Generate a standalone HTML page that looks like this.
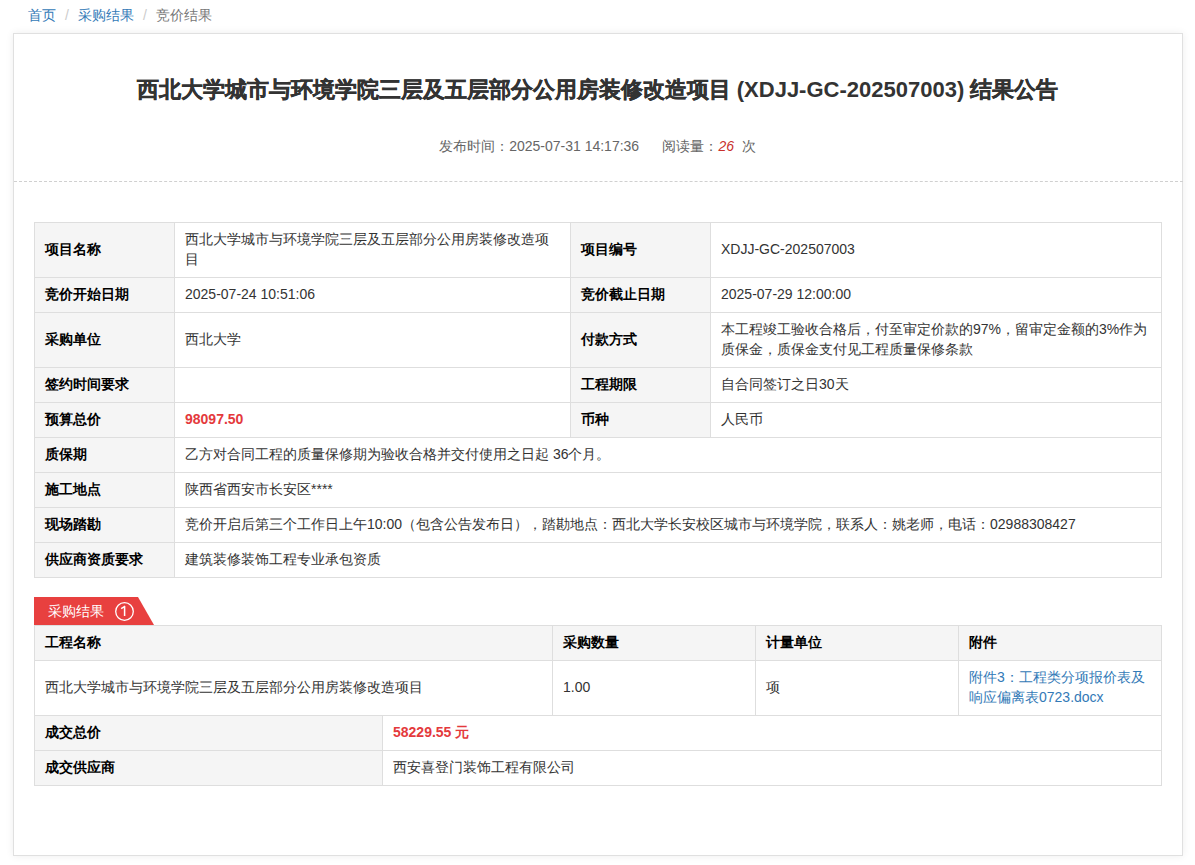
<!DOCTYPE html>
<html><head><meta charset="utf-8">
<style>
*{box-sizing:border-box;margin:0;padding:0}
html,body{width:1195px;height:865px;overflow:hidden;background:#fff}
body{font-family:"Liberation Sans",sans-serif;font-size:14px;color:#333;position:relative}
.bc{position:absolute;left:28px;top:6px;font-size:14px;line-height:18px;white-space:nowrap}
.bc a{color:#337ab7;text-decoration:none}
.bc .sep{color:#ccc;padding:0 9px}
.bc .cur{color:#777}
.card{position:absolute;left:13px;top:33px;width:1170px;height:823px;border:1px solid #e0e0e0;box-shadow:0 0 8px rgba(0,0,0,.07);background:#fff}
.title{position:absolute;left:0;top:75px;-webkit-text-stroke:0.35px #333;width:1195px;text-align:center;font-size:22px;font-weight:bold;color:#333;line-height:30px;white-space:nowrap}
.meta{position:absolute;left:0;top:137px;width:1195px;text-align:center;font-size:14px;color:#666;line-height:18px;white-space:nowrap}
.meta i{color:#c9302c}
.dash{position:absolute;left:14px;top:181px;width:1169px;height:0;border-top:1px dashed #d0d0d0}
table{position:absolute;border-collapse:collapse;table-layout:fixed}
td,th{border:1px solid #dedede;font-size:14px;line-height:20px;padding:0 10px 2px;vertical-align:middle;text-align:left}
td.l,th{background:#f5f5f5;font-weight:bold;color:#000}
td.v{color:#333;background:#fff}
.red{color:#e4393c;font-weight:bold}
.t1{left:34px;top:222px;width:1127px}
.tab{position:absolute;left:34px;top:597px;width:120px;height:28px}
.t2{left:34px;top:625px;width:1127px}
a.lk{color:#337ab7;text-decoration:none}
</style></head><body>
<div class="bc"><a>首页</a><span class="sep">/</span><a>采购结果</a><span class="sep">/</span><span class="cur">竞价结果</span></div>
<div class="card"></div>
<div class="title">西北大学城市与环境学院三层及五层部分公用房装修改造项目 <span style="-webkit-text-stroke:0">(XDJJ-GC-202507003)</span> 结果公告</div>
<div class="meta">发布时间：2025-07-31 14:17:36&nbsp;&nbsp;&nbsp;&nbsp;&nbsp;&nbsp;阅读量：<i>26</i>&nbsp; 次</div>
<div class="dash"></div>
<table class="t1">
<colgroup><col style="width:140px"><col style="width:396px"><col style="width:140px"><col style="width:451px"></colgroup>
<tr style="height:55px"><td class="l">项目名称</td><td class="v">西北大学城市与环境学院三层及五层部分公用房装修改造项目</td><td class="l">项目编号</td><td class="v">XDJJ-GC-202507003</td></tr>
<tr style="height:35px"><td class="l">竞价开始日期</td><td class="v">2025-07-24 10:51:06</td><td class="l">竞价截止日期</td><td class="v">2025-07-29 12:00:00</td></tr>
<tr style="height:55px"><td class="l">采购单位</td><td class="v">西北大学</td><td class="l">付款方式</td><td class="v">本工程竣工验收合格后，付至审定价款的97%，留审定金额的3%作为质保金，质保金支付见工程质量保修条款</td></tr>
<tr style="height:35px"><td class="l">签约时间要求</td><td class="v"></td><td class="l">工程期限</td><td class="v">自合同签订之日30天</td></tr>
<tr style="height:35px"><td class="l">预算总价</td><td class="v"><span class="red">98097.50</span></td><td class="l">币种</td><td class="v">人民币</td></tr>
<tr style="height:35px"><td class="l">质保期</td><td class="v" colspan="3">乙方对合同工程的质量保修期为验收合格并交付使用之日起 36个月。</td></tr>
<tr style="height:35px"><td class="l">施工地点</td><td class="v" colspan="3">陕西省西安市长安区****</td></tr>
<tr style="height:35px"><td class="l">现场踏勘</td><td class="v" colspan="3">竞价开启后第三个工作日上午10:00（包含公告发布日），踏勘地点：西北大学长安校区城市与环境学院，联系人：姚老师，电话：02988308427</td></tr>
<tr style="height:35px"><td class="l">供应商资质要求</td><td class="v" colspan="3">建筑装修装饰工程专业承包资质</td></tr>
</table>
<div class="tab"><svg width="120" height="28" style="position:absolute;left:0;top:0"><polygon points="0,0 104,0 120,28 0,28" fill="#e8403f"/><circle cx="90.5" cy="14.5" r="8.8" fill="none" stroke="#fff" stroke-width="1.3"/><path d="M90.6 9.3V19M87.2 11.6L91.2 9.2" stroke="#fff" stroke-width="1.5" fill="none"/></svg><span style="position:absolute;left:14px;top:5px;line-height:18px;color:#fff;font-size:14px;white-space:nowrap">采购结果</span></div>
<table class="t2">
<colgroup><col style="width:348px"><col style="width:170px"><col style="width:203px"><col style="width:203px"><col style="width:203px"></colgroup>
<tr style="height:35px"><th colspan="2">工程名称</th><th>采购数量</th><th>计量单位</th><th>附件</th></tr>
<tr style="height:55px"><td class="v" colspan="2">西北大学城市与环境学院三层及五层部分公用房装修改造项目</td><td class="v">1.00</td><td class="v">项</td><td class="v"><a class="lk">附件3：工程类分项报价表及响应偏离表0723.docx</a></td></tr>
<tr style="height:35px"><td class="l">成交总价</td><td class="v" colspan="4"><span class="red">58229.55 元</span></td></tr>
<tr style="height:35px"><td class="l">成交供应商</td><td class="v" colspan="4">西安喜登门装饰工程有限公司</td></tr>
</table>
</body></html>
